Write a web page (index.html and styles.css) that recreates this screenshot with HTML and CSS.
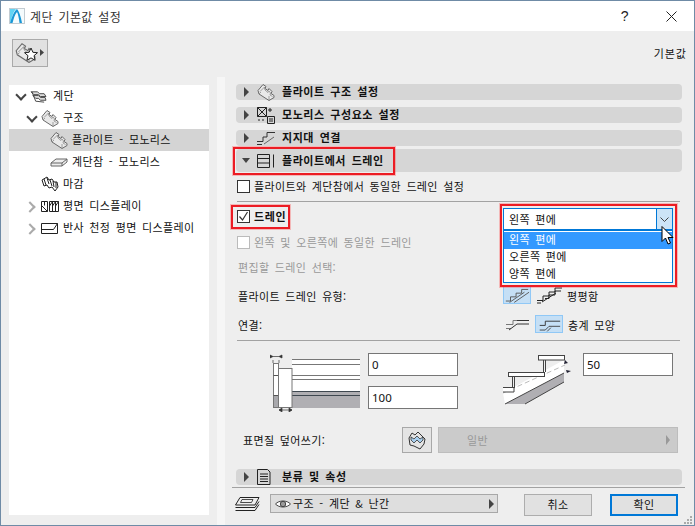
FILE: index.html
```html
<!DOCTYPE html>
<html lang="ko">
<head>
<meta charset="utf-8">
<title>계단 기본값 설정</title>
<link rel="stylesheet" href="styles.css">
</head>
<body>
<svg class="defs" width="0" height="0">
  <symbol id="flight" viewBox="0 0 18 18"><path d="M1 7.500L6 1.500l3 2-1 2 3 2 1-2 3 3-1 2 3 2v2l-5 3L2 11z" fill="#e9e9e9" stroke="#6a6a6a"/><path d="M3 8.500l4.500-4.500.5 3 3 2.500 1-1.500 1.500 2-.5 2 2.500 1.500M2 11l2-2M12 17l0-4" fill="none" stroke="#8a8a8a" stroke-width=".8"/></symbol>
</svg>
<main class="window">
  <header class="titlebar">
    <svg class="app-icon" width="16" height="16" viewBox="0 0 16 16"><rect x=".5" y=".5" width="15" height="15" fill="#f4fbfd" stroke="#c3ccd2"/><path d="M1 15C3 9 4 4 7 1H1z" fill="#62d4f4"/><path d="M1 15C3 9 5 3 8 1c2 2 4 8 5 14h-2.500C10 10 9 6 8 4 6 6 4.500 11 3.500 15z" fill="#1a97d6"/></svg>
    <span class="title-text">계단 기본값 설정</span>
    <span class="help">?</span>
    <svg class="close" width="11" height="11" viewBox="0 0 11 11"><path d="M.5.500l10 10M10.500.500l-10 10" stroke="#222" stroke-width="1" fill="none"/></svg>
  </header>

  <div class="toolbar">
    <button class="fav-btn">
      <svg width="30" height="24" viewBox="0 0 30 24"><use href="#flight" x="0" y="1" width="21" height="21"/><path d="M16 7l1.900 4.300 4.600.400-3.500 3 1.100 4.600-4.100-2.400-4.100 2.400 1.100-4.600-3.500-3 4.600-.400z" fill="#fff" stroke="#222"/><path d="M25 8l4 3.500-4 3.500z" fill="#444"/></svg>
    </button>
    <span class="default-label">기본값</span>
  </div>

  <div class="main">
    <nav class="tree">
      <div class="t-row lv0"><span class="chev down"></span>
        <svg class="t-icon" width="17" height="15" viewBox="0 0 18 16"><path d="M1 3h7l2 2 5 0 2 3-6 0-2-2H4zM3 7h6l2 2 5 0 1 3-6 0-2-2H6z" fill="#ddd" stroke="#444"/><path d="M2 3l4 10 9 1" fill="none" stroke="#444"/></svg>
        <span>계단</span></div>
      <div class="t-row lv1"><span class="chev down"></span>
        <svg class="t-icon" width="18" height="18"><use href="#flight"/></svg>
        <span>구조</span></div>
      <div class="t-row lv2 sel"><span class="chev none"></span>
        <svg class="t-icon" width="18" height="18"><use href="#flight"/></svg>
        <span>플라이트 - 모노리스</span></div>
      <div class="t-row lv2"><span class="chev none"></span>
        <svg class="t-icon" width="18" height="10" viewBox="0 0 18 10"><path d="M1 6l5-4h11v3l-5 4H1z" fill="#eee" stroke="#666"/><path d="M1 6h11l5-4M12 6v3" fill="none" stroke="#666"/></svg>
        <span>계단참 - 모노리스</span></div>
      <div class="t-row lv1"><span class="chev none"></span>
        <svg class="t-icon" width="18" height="16" viewBox="0 0 18 16"><path d="M1 4l5-3 2 3 3-1 2 3 3 0 1 5-3 4-3-4-3 1-2-3-3 1z" fill="#fff" stroke="#222"/><path d="M3 3l2 6M6 2l2 6M9 4l2 6M12 5l1 6M15 6l0 6" stroke="#222" fill="none"/></svg>
        <span>마감</span></div>
      <div class="t-row lv1"><span class="chev right"></span>
        <svg class="t-icon" width="18" height="11" viewBox="0 0 18 11"><path d="M.5.500h6v10h-6zM3.500.500v4M.5 4.500l6 6M8.500.500h9v10h-9zM11.500.500v10M14.500.500v10M8.500 5l3-4.500M11.500 5l3-4.500M14.500 5l3-4.500" fill="none" stroke="#222"/></svg>
        <span>평면 디스플레이</span></div>
      <div class="t-row lv1"><span class="chev right"></span>
        <svg class="t-icon" width="18" height="11" viewBox="0 0 18 11"><path d="M.5.500h16v10H.5zM.5 6.500h12l4-6" fill="none" stroke="#222"/></svg>
        <span>반사 천정 평면 디스플레이</span></div>
    </nav>
    <div class="strip"></div>

    <section class="panel">
      <div class="hdr hdr-first"><span class="tri"></span>
        <svg class="h-icon" width="18" height="18"><use href="#flight"/></svg><span>플라이트 구조 설정</span></div>
      <div class="hdr"><span class="tri"></span>
        <svg class="h-icon" width="18" height="18" viewBox="0 0 18 18"><path d="M.5 1.500h9v9h-9zM.5 1.500l9 9M9.500 1.500l-9 9" fill="none" stroke="#222"/><path d="M13 2v4M11 4h4" stroke="#222" fill="none"/><path d="M10.500 10.500h7v7h-7zM12 13h4M12 15h4" fill="none" stroke="#222"/><path d="M1 14h2M5 14h2" stroke="#222"/></svg><span>모노리스 구성요소 설정</span></div>
      <div class="hdr"><span class="tri"></span>
        <svg class="h-icon" width="18" height="16" viewBox="0 0 18 16"><path d="M0 11.500h6V7h4V2.500h8M0 14.500h5" fill="none" stroke="#333"/><path d="M7 14l10-7" fill="none" stroke="#666"/></svg><span>지지대 연결</span></div>
      <div class="hdr hdr-open"><span class="tri-down"></span>
        <svg class="h-icon" width="18" height="14" viewBox="0 0 18 14"><path d="M.5.500h12v13H.5zM.5 4.500h12M.5 9h12M16.500.500v13" fill="none" stroke="#222"/></svg><span>플라이트에서 드레인</span></div>

      <label class="row row-same"><span class="cb"></span><span>플라이트와 계단참에서 동일한 드레인 설정</span></label>
      <hr class="rule rule-a">
      <label class="row row-drain"><span class="cb cb-on"><svg width="11" height="11" viewBox="0 0 11 11"><path d="M1.500 5.500l3 3.500 5-8" fill="none" stroke="#333" stroke-width="1.200"/></svg></span><b>드레인</b></label>
      <label class="row row-equal dim"><span class="cb cb-dim"></span><span>왼쪽 및 오른쪽에 동일한 드레인</span></label>

      <div class="row row-edit dim lab">편집할 드레인 선택:</div>
      <div class="row row-type lab"><span class="lab-w">플라이트 드레인 유형:</span>
        <span class="opt opt-on opt-a"><svg width="28" height="18" viewBox="0 0 28 18"><path d="M2 15.500h5V11h6V7h6V3h7M6 17l16-11M11 17l16-11" fill="none" stroke="#555"/></svg></span>
        <span class="opt opt-b"><svg width="25" height="18" viewBox="0 0 25 18"><path d="M0 14.500h6V10h6V6h6V2h7M0 17h4M5 16l14-9M8 12.500h4V9h6V5h6" fill="none" stroke="#222"/></svg></span>
        <span class="opt-text">평평함</span></div>
      <div class="row row-join lab"><span class="lab-w">연결:</span>
        <span class="opt opt-c"><svg width="25" height="18" viewBox="0 0 25 18"><path d="M1 9.500h7V5.500h9M1 13.500h5" fill="none" stroke="#777"/><path d="M4 15l8-6h12M12 5.500h12" fill="none" stroke="#333"/></svg></span>
        <span class="opt opt-on opt-d"><svg width="28" height="18" viewBox="0 0 28 18"><path d="M4 10.500h6V6h16" fill="none" stroke="#333"/><path d="M4 15.500h6l4-4h12M12 17l4-4" fill="none" stroke="#444"/></svg></span>
        <span class="opt-text">층계 모양</span></div>
      <hr class="rule rule-b">

      <div class="diagrams">
        <svg class="dia-left" width="90" height="60" viewBox="0 0 90 60">
          <rect x="22" y="7" width="68" height="49" fill="#fff"/>
          <rect x="22" y="39" width="68" height="17" fill="#b0afb3"/>
          <path d="M22 7.500h68M22 12.500h68M22 23.500h68M22 27.500h68" stroke="#777" fill="none"/>
          <path d="M22 39.500h68M22 43.500h68" stroke="#3f4850" fill="none"/>
          <rect x="3.500" y="11.500" width="5" height="44" fill="#fff" stroke="#777"/>
          <rect x="4" y="43" width="4" height="12" fill="#a9a9ad"/>
          <path d="M3.500 23.500h5M3.500 43.500h5" stroke="#555"/>
          <rect x="8.500" y="16.500" width="13.500" height="39" fill="#fff" stroke="#777"/>
          <path d="M0 3l3 1.500L0 6zM12 3L9 4.500 12 6zM3 4.500h6M3 8v3M9 8v3" fill="#333" stroke="#333" stroke-width=".7"/>
          <path d="M9 58h13M9 58l3-2v4zM22 58l-3-2v4z" fill="#333" stroke="#333" stroke-width=".7"/>
        </svg>
        <div class="inputs">
          <input class="num" value="0">
          <input class="num" value="100">
        </div>
        <svg class="dia-right" width="72" height="56" viewBox="0 0 72 56">
          <path d="M3 41l61-33v13L25 52H5z" fill="#fff"/>
          <path d="M64 21v9L25 52H5z" fill="#b0afb3"/>
          <path d="M64 30L25 52M64 21L5 52" stroke="#444" fill="none"/>
          <path d="M3 41l62-28" stroke="#bbb" stroke-dasharray="5 3" fill="none"/>
          <rect x="38.500" y="3.500" width="26" height="4.500" fill="#fff" stroke="#444"/>
          <path d="M43.500 8v12M45.500 8v12M12.500 24v12M14.500 24v12" stroke="#444" fill="none"/>
          <rect x="8.500" y="20.500" width="36" height="4" fill="#fff" stroke="#444"/>
          <path d="M3 35.500h11v4.500H3" fill="#fff" stroke="#444"/>
          <path d="M65 8l3 3-4 1zM71 19l-4 2-1-3z" fill="#223"/>
        </svg>
        <input class="num num-right" value="50">
      </div>

      <div class="surface">
        <span class="surface-label">표면질 덮어쓰기:</span>
        <button class="surf-btn"><svg width="20" height="20" viewBox="0 0 20 20"><path d="M2 8l3-5 3 2 3-3 3 3 4 4-1 5-4 5-6-3-4-1z" fill="#e4e4e4" stroke="#333"/><path d="M4 7l3 2 3-3 3 3 3-2v3l-3 3-3-3-3 3-3-3z" fill="#a9cfee" stroke="#333" stroke-width=".8"/></svg></button>
        <div class="surf-select"><span>일반</span><span class="tri-dim"></span></div>
      </div>

      <div class="hdr hdr-last"><span class="tri"></span>
        <svg class="h-icon" width="14" height="16" viewBox="0 0 14 16"><path d="M.5.500h10l2.500 2.500v12.500H.5z" fill="none" stroke="#222"/><path d="M3 5h8M3 7.500h8M3 10h8M3 12.500h8" stroke="#222"/></svg><span>분류 및 속성</span></div>

      <footer class="footer">
        <svg class="layers" width="26" height="15" viewBox="0 0 26 15"><path d="M6 .500h19l-4 7.500H1.500z" fill="#eee" stroke="#222"/><path d="M1.500 10.500H21l4-6M1.500 13.500H21l4-6" fill="none" stroke="#222"/><path d="M8 2.500h11l-1.500 3H6.500z" fill="none" stroke="#222" stroke-width=".8"/></svg>
        <div class="layer-select">
          <svg width="16" height="10" viewBox="0 0 16 10"><path d="M.5 5C4 1 12 1 15.500 5 12 9 4 9 .5 5z" fill="#fff" stroke="#444"/><circle cx="8" cy="5" r="2.700" fill="#999" stroke="#444"/></svg>
          <span class="layer-text">구조 - 계단 &amp; 난간</span><span class="tri tri-end"></span>
        </div>
        <button class="btn btn-cancel">취소</button>
        <button class="btn btn-ok">확인</button>
      </footer>

      <div class="combo">
        <div class="combo-field"><span>왼쪽 편에</span><span class="combo-arrow"><svg width="9" height="5" viewBox="0 0 9 5"><path d="M.5.500l4 4 4-4" fill="none" stroke="#444"/></svg></span></div>
        <ul class="combo-list"><li class="picked">왼쪽 편에</li><li>오른쪽 편에</li><li>양쪽 편에</li></ul>
      </div>
      <svg class="cursor" width="13" height="19" viewBox="0 0 13 19"><path d="M1 .500v15l3.500-3.500 2.500 6 2.500-1-2.500-5.500h5z" fill="#fff" stroke="#000"/></svg>
      <span class="mark mark-hdr"></span>
      <span class="mark mark-drain"></span>
      <span class="mark mark-combo"></span>
    </section>
  </div>
  <svg class="grip" width="9" height="9" viewBox="0 0 9 9"><path d="M6 0h2v2H6zM3 3h2v2H3zM6 3h2v2H6zM0 6h2v2H0zM3 6h2v2H3zM6 6h2v2H6z" fill="#aaa"/></svg>
</main>
</body>
</html>
```
FILE: styles.css
```css
* { box-sizing: border-box; }
html, body { margin: 0; padding: 0; }
body { width: 695px; height: 526px; overflow: hidden; font-family: "Noto Sans CJK KR", "Noto Sans", sans-serif; font-size: 11px; color: #111; word-spacing: 2px; letter-spacing: .35px; }
.defs { position: absolute; }
.window { position: relative; width: 695px; height: 526px; border: 1px solid #6f8ba6; background: #eee; display: flex; flex-direction: column; }

.titlebar { height: 30px; background: #fff; display: flex; align-items: center; padding-left: 8px; flex: none; }
.app-icon { margin-right: 5px; }
.title-text { font-size: 12px; letter-spacing: 0.35px; word-spacing: 2px; color: #333; flex: 1; }
.help { font-family: "Liberation Sans", sans-serif; font-size: 14px; margin-right: 37px; color: #222; }
.close { margin-right: 17px; }

.toolbar { height: 46px; display: flex; align-items: center; justify-content: space-between; padding: 0 7px 2px 11px; flex: none; }
.fav-btn { width: 36px; height: 28px; padding: 0 0 0 2px; border: 1px solid #aaa; background: #e1e1e1; display: flex; align-items: center; }
.default-label { font-size: 11px; letter-spacing: 1px; }

.main { flex: 1; display: flex; min-height: 0; }
.tree { width: 200px; margin: 8px 8px 10px 8px; background: #fff; padding: 0; flex: none; }
.t-row { height: 22px; display: flex; align-items: center; font-size: 11px; letter-spacing: .35px; }
.t-row > span:last-child { margin-bottom: 2px; }
.t-row.lv0 { padding-left: 6px; }
.t-row.lv0 .t-icon { margin-right: 6px; }
.t-row.lv1 { padding-left: 17px; }
.t-row.lv2 { padding-left: 26px; }
.t-row.sel { background: #d4d4d4; }
.t-icon { margin: 0 4px 0 3px; flex: none; }
.chev { width: 12px; height: 12px; flex: none; position: relative; }
.chev.down::before, .chev.right::before { content: ""; position: absolute; left: 2px; top: 1px; width: 6px; height: 6px; border-right: 2px solid #444; border-bottom: 2px solid #444; transform: rotate(45deg); }
.chev.right::before { left: 0; top: 3px; border-color: #aaa; transform: rotate(-45deg); }
.strip { width: 8px; background: #f6f6f6; flex: none; }

.panel { position: relative; flex: 1; padding: 7px 12px 0 11px; }
.hdr { height: 16px; margin-top: 7px; background: #d6d6d6; border-radius: 4px; display: flex; align-items: center; font-weight: 700; font-size: 11px; letter-spacing: .55px; position: relative; padding: 0 0 2px 46px; }
.hdr-first { margin-top: 0; }
.hdr-open { height: 23px; margin-top: 3px; }
.hdr-last { margin-top: 16px; }
.h-icon { position: absolute; left: 21px; top: 50%; transform: translateY(-50%); }
.tri, .tri-down, .tri-dim { width: 0; height: 0; display: block; }
.tri { position: absolute; left: 8px; top: 3px; border-left: 5px solid #444; border-top: 5px solid transparent; border-bottom: 5px solid transparent; }
.tri-down { position: absolute; left: 6px; top: 9px; border-top: 5px solid #444; border-left: 4px solid transparent; border-right: 4px solid transparent; }

.row { height: 22px; display: flex; align-items: center; margin-left: 1px; }
.cb { width: 13px; height: 13px; border: 1px solid #333; background: #fff; margin-right: 4px; flex: none; display: flex; align-items: center; justify-content: center; }
.cb-dim { border-color: #bbb; }
.dim { color: #999; }
.lab { margin-left: 2px; }
.row-same { margin-top: 3px; }
.rule { border: 0; height: 1px; background: #a2a2a2; margin: 0 2px 0 1px; }
.rule-a { margin-top: 4px; }
.row-drain { margin-top: 3px; }
.row-drain b { font-weight: 700; letter-spacing: .6px; }
.row-equal { margin-top: 4px; }
.row-edit { margin-top: 3px; }
.row-type { margin-top: 7px; }
.row-join { margin-top: 7px; }
.rule-b { margin-top: 4px; }
.lab-w { width: 265px; flex: none; }
.opt { display: flex; flex: none; align-items: center; justify-content: center; margin-top: -2px; }
.opt-on { background: #c5dff5; border: 1px solid #90c8f6; }
.opt-a { width: 28px; height: 18px; }
.opt-b { width: 25px; height: 18px; margin-left: 6px; }
.opt-c { width: 25px; height: 18px; margin-left: 2px; }
.opt-d { width: 28px; height: 18px; margin-left: 5px; }
.opt-text { margin-left: 5px; }

.diagrams { display: flex; margin: 11px 0 0 34px; height: 60px; }
.inputs { margin: 1px 0 0 8px; display: flex; flex-direction: column; gap: 10px; width: 90px; }
.num { width: 90px; height: 23px; border: 1px solid #767676; background: #fff; padding: 0 3px; font: 11.500px "Noto Sans", sans-serif; color: #111; }
.dia-right { margin: 0 11px 0 42px; }
.num-right { margin-top: 1px; }

.surface { display: flex; align-items: center; height: 26px; margin-top: 15px; }
.surface-label { margin-left: 7px; width: 159px; flex: none; }
.surf-btn { width: 30px; height: 26px; padding: 0; border: 1px solid #a8a8a8; background: #e4e4e4; display: flex; align-items: center; justify-content: center; }
.surf-select { width: 240px; height: 26px; margin-left: 6px; background: #cbcbcb; border: 1px solid #bdbdbd; display: flex; align-items: center; justify-content: space-between; color: #999; padding-left: 28px; padding-right: 7px; }
.tri-dim { border-left: 4px solid #999; border-top: 5px solid transparent; border-bottom: 5px solid transparent; }

.footer { height: 38px; margin: 2px -3px 0 -4px; border-top: 1px solid #a2a2a2; display: flex; align-items: flex-start; padding-top: 6px; }
.layers { margin: 3px 10px 0 2px; flex: none; }
.layer-select { position: relative; width: 228px; height: 19px; border: 1px solid #a8a8a8; background: #dedede; display: flex; align-items: center; padding-left: 4px; gap: 2px; font-size: 11px; margin-top: 0; }
.layer-text { margin-bottom: 2px; }
.tri-end { left: auto; right: 3px; top: 4px; }
.btn { width: 68px; height: 22px; background: #e1e1e1; border: 1px solid #adadad; padding: 0 0 2px; font: 11px "Noto Sans CJK KR", sans-serif; color: #111; letter-spacing: .5px; }
.btn-cancel { margin-left: 26px; }
.btn-ok { margin-left: 18px; border: 2px solid #0078d7; }

.combo { position: absolute; left: 278px; top: 131px; width: 170px; background: #fff; }
.combo-field { height: 22px; border: 1px solid #0078d7; display: flex; align-items: center; justify-content: space-between; padding-left: 5px; }
.combo-arrow { width: 16px; height: 20px; background: #cce4f7; border-left: 1px solid #0078d7; display: flex; align-items: center; justify-content: center; }
.combo-list { list-style: none; margin: 0; padding: 1px 0; border: 1px solid #0078d7; height: 53px; }
.combo-list li { height: 17px; line-height: 15px; padding-left: 5px; }
.combo-list .picked { background: #3399ff; color: #fff; }
.cursor { position: absolute; left: 436px; top: 149px; }

.mark { position: absolute; border: 2px solid #ec1c24; box-shadow: 0 0 0 1px rgba(255, 60, 60, .3); }
.mark-hdr { left: 8px; top: 70px; width: 162px; height: 28px; }
.mark-drain { left: 6px; top: 128px; width: 59px; height: 24px; }
.mark-combo { left: 275px; top: 127px; width: 177px; height: 83px; }
.grip { position: absolute; right: 1px; bottom: 0; }
```
